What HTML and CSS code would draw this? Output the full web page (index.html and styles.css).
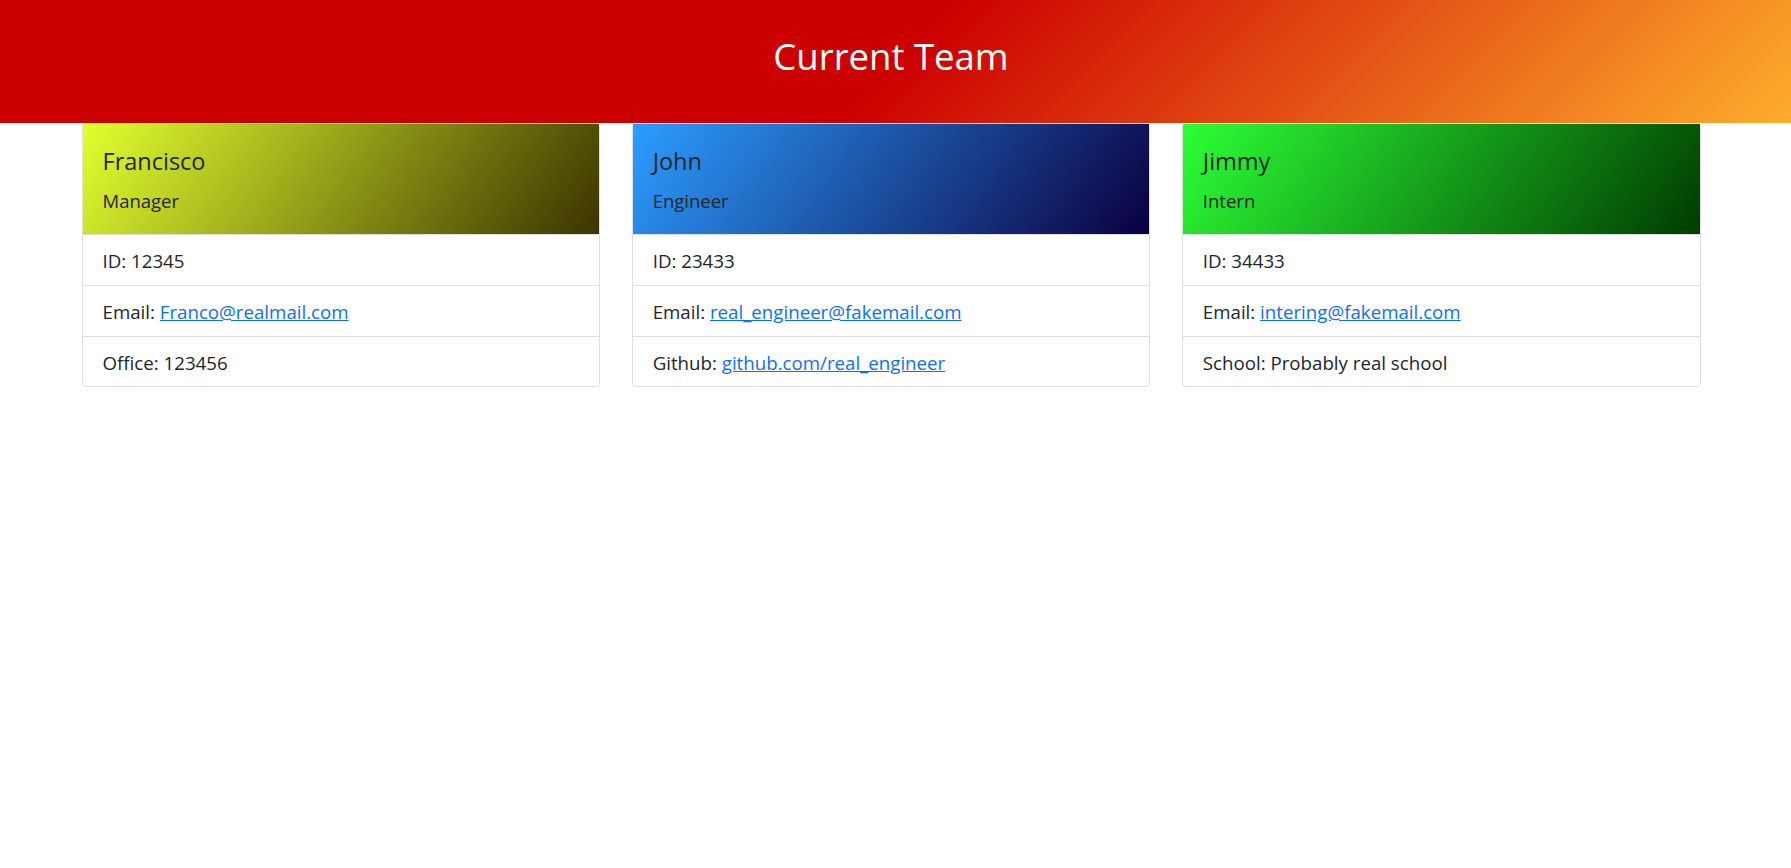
FILE: index.html
```html
<!DOCTYPE html>
<html lang="en">
<head>
<meta charset="utf-8">
<title>Current Team</title>
<link rel="stylesheet" href="styles.css">
</head>
<body>
<header class="top">
  <h1 class="top-title">Current Team</h1>
</header>
<main class="team">
  <section class="card">
    <div class="card-head manager">
      <h2 class="name">Francisco</h2>
      <h3 class="role">Manager</h3>
    </div>
    <ul class="rows">
      <li class="row">ID: 12345</li>
      <li class="row">Email: <a href="#">Franco@realmail.com</a></li>
      <li class="row">Office: 123456</li>
    </ul>
  </section>
  <section class="card">
    <div class="card-head engineer">
      <h2 class="name">John</h2>
      <h3 class="role">Engineer</h3>
    </div>
    <ul class="rows">
      <li class="row">ID: 23433</li>
      <li class="row">Email: <a href="#">real_engineer@fakemail.com</a></li>
      <li class="row">Github: <a href="#">github.com/real_engineer</a></li>
    </ul>
  </section>
  <section class="card">
    <div class="card-head intern">
      <h2 class="name">Jimmy</h2>
      <h3 class="role">Intern</h3>
    </div>
    <ul class="rows">
      <li class="row">ID: 34433</li>
      <li class="row">Email: <a href="#">intering@fakemail.com</a></li>
      <li class="row">School: Probably real school</li>
    </ul>
  </section>
</main>
</body>
</html>
```

FILE: styles.css
```css
* { box-sizing: border-box; }

body {
  margin: 0;
  font-family: "Open Sans", "Noto Sans", sans-serif;
  color: #212529;
  background: #fff;
}

.top {
  height: 123px;
  padding: 34px 9px 0 0;
  background: linear-gradient(135deg, #cc0000 50%, #fdad2c 100%);
  text-align: center;
}

.top-title {
  margin: 0;
  font-size: 36.5px;
  line-height: 44px;
  font-weight: 400;
  color: #fff;
}

.team {
  display: grid;
  grid-template-columns: repeat(3, 1fr);
  gap: 31.5px;
  width: 1619px;
  margin-left: 81.5px;
}

.card {
  border: 1px solid #dfdfdf;
  border-radius: 4px;
  background: #fff;
}

.card-head {
  padding: 23px 20px 22px;
}

.manager { background: linear-gradient(125deg, #e2ff2e, #3b3400); }
.engineer { background: linear-gradient(125deg, #2c9dff, #0b003f); }
.intern { background: linear-gradient(125deg, #2cff36, #003c00); }

.name {
  margin: 0 0 15px;
  font-size: 23.5px;
  line-height: 28px;
  font-weight: 400;
}

.role {
  margin: 0;
  font-size: 18.5px;
  line-height: 22px;
  font-weight: 400;
}

.rows {
  list-style: none;
  margin: 0;
  padding: 0;
}

.row {
  border-top: 1px solid #dfdfdf;
  padding: 13px 20px 11px;
  font-size: 18.7px;
  line-height: 26px;
}

.row:last-child {
  padding-bottom: 10px;
}

.row a {
  color: #0d6efd;
  text-decoration: underline;
}
```
